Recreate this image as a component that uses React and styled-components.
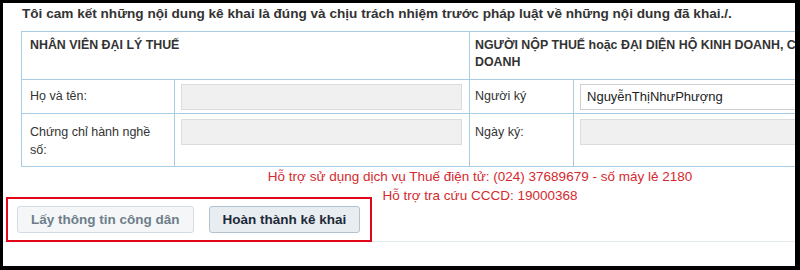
import React from 'react';
import styled, { createGlobalStyle } from 'styled-components';

const GlobalStyle = createGlobalStyle`
  html, body {
    margin: 0;
    padding: 0;
    background: #000;
  }
  body {
    font-family: "Liberation Sans", Arial, sans-serif;
    color: #333;
  }
`;

const Frame = styled.div`
  position: relative;
  margin: 3px 0 0 3px;
  width: 792px;
  height: 263px;
  background: #fff;
  overflow: hidden;
`;

const Page = styled.div`
  width: 954px;
`;

const Section = styled.div`
  padding: 2px 18px 0 18px;
`;

const Intro = styled.p`
  margin: 0 0 8px 1px;
  font-size: 13.6px;
  font-weight: bold;
  line-height: 18px;
  color: #333;
  white-space: nowrap;
`;

const Table = styled.table`
  width: 883px;
  border-collapse: collapse;
  table-layout: fixed;
  font-size: 12.5px;
  color: #333;

  td, th {
    border: 1px solid #a9cce5;
  }
`;

const HeadCell = styled.th`
  height: 42px;
  padding: 5px ${(p) => p.$pad}px 0;
  text-align: left;
  vertical-align: top;
  font-size: 12.4px;
  line-height: 17px;
  font-weight: bold;
`;

const Row = styled.tr`
  height: ${(p) => p.$h}px;
`;

const Label = styled.td`
  padding: ${(p) => p.$top}px ${(p) => p.$pad}px 0;
  vertical-align: top;
  line-height: 18px;
`;

const FieldCell = styled.td`
  padding: ${(p) => p.$top}px 7px 0 6px;
  vertical-align: top;
`;

const Field = styled.div`
  box-sizing: border-box;
  height: 26px;
  padding: 0 6px;
  border: 1px solid ${(p) => (p.$filled ? '#cfcfcf' : '#dcdcdc')};
  background: ${(p) => (p.$filled ? '#fff' : '#f0f0f0')};
  font-size: 13px;
  line-height: 24px;
  color: #222;
  white-space: nowrap;
`;

const Support = styled.div`
  text-align: center;
  color: #d42a2f;
  font-size: 13.5px;
  line-height: 19px;
`;

const Footer = styled.div`
  position: relative;
  display: flex;
  gap: 15px;
  padding: 1px 0 8px 14px;
  border-bottom: 1px solid #e4ebef;
`;

const Button = styled.button`
  box-sizing: border-box;
  height: 27px;
  padding: 0 13px;
  border-radius: 3px;
  border: 1px solid ${(p) => (p.$primary ? '#b3c2cf' : '#d3dce4')};
  background: ${(p) => (p.$primary ? '#e8edf2' : '#f4f6f8')};
  color: ${(p) => (p.$primary ? '#1d2a38' : '#6e7e8b')};
  font-family: "Liberation Sans", Arial, sans-serif;
  font-size: 13.5px;
  font-weight: bold;
  cursor: ${(p) => (p.disabled ? 'default' : 'pointer')};
`;

const Highlight = styled.div`
  position: absolute;
  left: 3px;
  top: -8px;
  width: 366px;
  height: 45px;
  box-sizing: border-box;
  border: 2.5px solid #e3061a;
  pointer-events: none;
`;

export default function App() {
  return (
    <>
      <GlobalStyle />
      <Frame>
        <Page>
          <Section>
            <Intro>
              Tôi cam kết những nội dung kê khai là đúng và chịu trách nhiệm trước pháp luật về những nội dung đã khai./.
            </Intro>
            <Table>
              <colgroup>
                <col style={{ width: 153 }} />
                <col style={{ width: 295 }} />
                <col style={{ width: 104 }} />
                <col style={{ width: 331 }} />
              </colgroup>
              <thead>
                <tr>
                  <HeadCell colSpan={2} $pad={8}>NHÂN VIÊN ĐẠI LÝ THUẾ</HeadCell>
                  <HeadCell colSpan={2} $pad={5}>
                    NGƯỜI NỘP THUẾ hoặc ĐẠI DIỆN HỘ KINH DOANH, CÁ NHÂN KINH DOANH
                  </HeadCell>
                </tr>
              </thead>
              <tbody>
                <Row $h={34}>
                  <Label $top={7} $pad={8}>Họ và tên:</Label>
                  <FieldCell $top={4}><Field /></FieldCell>
                  <Label $top={7} $pad={5}>Người ký</Label>
                  <FieldCell $top={4}><Field $filled>NguyễnThịNhưPhượng</Field></FieldCell>
                </Row>
                <Row $h={53}>
                  <Label $top={9} $pad={8}>Chứng chỉ hành nghề số:</Label>
                  <FieldCell $top={5}><Field /></FieldCell>
                  <Label $top={9} $pad={5}>Ngày ký:</Label>
                  <FieldCell $top={5}><Field /></FieldCell>
                </Row>
              </tbody>
            </Table>
          </Section>
          <Support>
            Hỗ trợ sử dụng dịch vụ Thuế điện tử: (024) 37689679 - số máy lẻ 2180
            <br />
            Hỗ trợ tra cứu CCCD: 19000368
          </Support>
          <Footer>
            <Button disabled>Lấy thông tin công dân</Button>
            <Button $primary>Hoàn thành kê khai</Button>
            <Highlight />
          </Footer>
        </Page>
      </Frame>
    </>
  );
}
